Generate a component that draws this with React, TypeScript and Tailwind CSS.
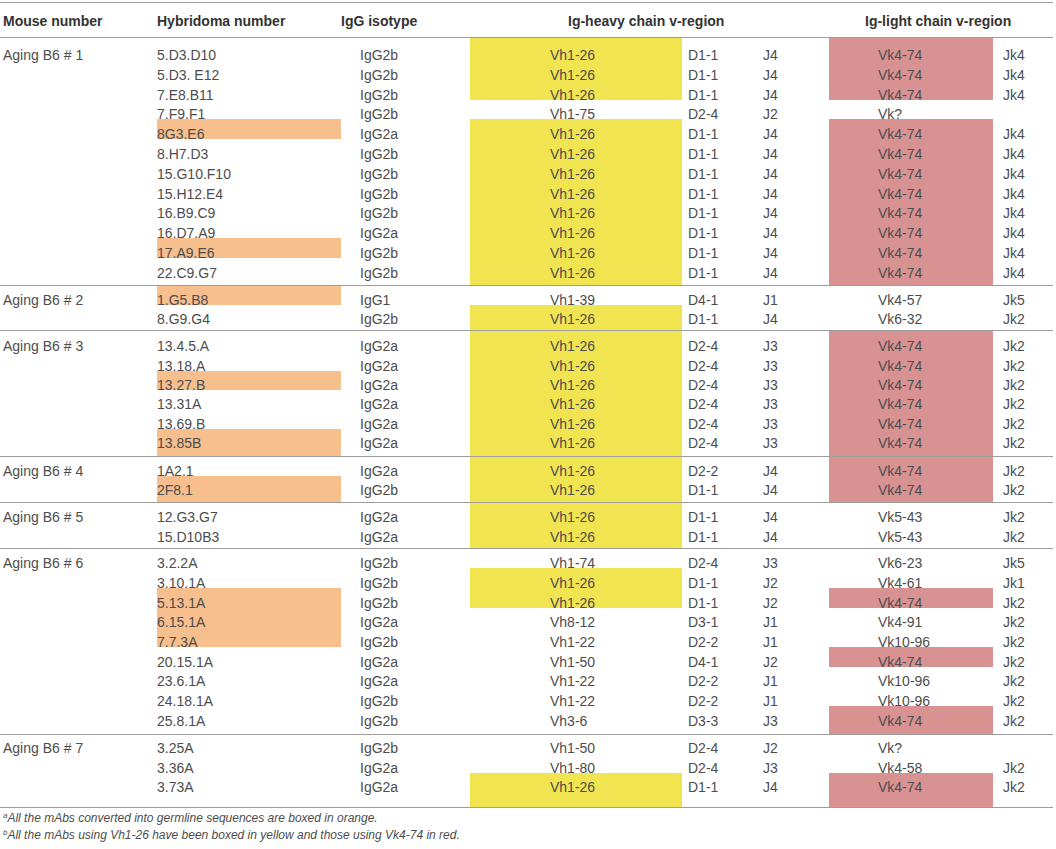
import React from "react";

type Row = {
  m?: string;
  h: string;
  i: string;
  vh: string;
  d: string;
  j: string;
  vk: string;
  jk: string;
  o?: boolean;
  y?: boolean;
  r?: boolean;
};

type Group = {
  first: string;
  mid: string;
  last: string;
  pb: string;
  rows: Row[];
};

const V = (
  h: string,
  i: string,
  vh: string,
  d: string,
  j: string,
  vk: string,
  jk: string,
  flags = "",
  m?: string
): Row => ({
  m,
  h,
  i,
  vh,
  d,
  j,
  vk,
  jk,
  o: flags.includes("o"),
  y: flags.includes("y"),
  r: flags.includes("r"),
});

const groups: Group[] = [
  {
    first: "h-[22px]",
    mid: "h-[19.8px]",
    last: "h-[26.8px]",
    pb: "pb-[7px]",
    rows: [
      V("5.D3.D10", "IgG2b", "Vh1-26", "D1-1", "J4", "Vk4-74", "Jk4", "yr", "Aging B6 # 1"),
      V("5.D3. E12", "IgG2b", "Vh1-26", "D1-1", "J4", "Vk4-74", "Jk4", "yr"),
      V("7.E8.B11", "IgG2b", "Vh1-26", "D1-1", "J4", "Vk4-74", "Jk4", "yr"),
      V("7.F9.F1", "IgG2b", "Vh1-75", "D2-4", "J2", "Vk?", ""),
      V("8G3.E6", "IgG2a", "Vh1-26", "D1-1", "J4", "Vk4-74", "Jk4", "oyr"),
      V("8.H7.D3", "IgG2b", "Vh1-26", "D1-1", "J4", "Vk4-74", "Jk4", "yr"),
      V("15.G10.F10", "IgG2b", "Vh1-26", "D1-1", "J4", "Vk4-74", "Jk4", "yr"),
      V("15.H12.E4", "IgG2b", "Vh1-26", "D1-1", "J4", "Vk4-74", "Jk4", "yr"),
      V("16.B9.C9", "IgG2b", "Vh1-26", "D1-1", "J4", "Vk4-74", "Jk4", "yr"),
      V("16.D7.A9", "IgG2a", "Vh1-26", "D1-1", "J4", "Vk4-74", "Jk4", "yr"),
      V("17.A9.E6", "IgG2b", "Vh1-26", "D1-1", "J4", "Vk4-74", "Jk4", "oyr"),
      V("22.C9.G7", "IgG2b", "Vh1-26", "D1-1", "J4", "Vk4-74", "Jk4", "yr"),
    ],
  },
  {
    first: "h-[19px]",
    mid: "h-[19.3px]",
    last: "h-[25.7px]",
    pb: "pb-[6.4px]",
    rows: [
      V("1.G5.B8", "IgG1", "Vh1-39", "D4-1", "J1", "Vk4-57", "Jk5", "o", "Aging B6 # 2"),
      V("8.G9.G4", "IgG2b", "Vh1-26", "D1-1", "J4", "Vk6-32", "Jk2", "y"),
    ],
  },
  {
    first: "h-[20px]",
    mid: "h-[19.3px]",
    last: "h-[27px]",
    pb: "pb-[7.4px]",
    rows: [
      V("13.4.5.A", "IgG2a", "Vh1-26", "D2-4", "J3", "Vk4-74", "Jk2", "yr", "Aging B6 # 3"),
      V("13.18.A", "IgG2a", "Vh1-26", "D2-4", "J3", "Vk4-74", "Jk2", "yr"),
      V("13.27.B", "IgG2a", "Vh1-26", "D2-4", "J3", "Vk4-74", "Jk2", "oyr"),
      V("13.31A", "IgG2a", "Vh1-26", "D2-4", "J3", "Vk4-74", "Jk2", "yr"),
      V("13.69.B", "IgG2a", "Vh1-26", "D2-4", "J3", "Vk4-74", "Jk2", "yr"),
      V("13.85B", "IgG2a", "Vh1-26", "D2-4", "J3", "Vk4-74", "Jk2", "oyr"),
    ],
  },
  {
    first: "h-[19.3px]",
    mid: "h-[19.3px]",
    last: "h-[25.7px]",
    pb: "pb-[6.4px]",
    rows: [
      V("1A2.1", "IgG2a", "Vh1-26", "D2-2", "J4", "Vk4-74", "Jk2", "yr", "Aging B6 # 4"),
      V("2F8.1", "IgG2b", "Vh1-26", "D1-1", "J4", "Vk4-74", "Jk2", "oyr"),
    ],
  },
  {
    first: "h-[19.3px]",
    mid: "h-[19.7px]",
    last: "h-[25.7px]",
    pb: "pb-[6px]",
    rows: [
      V("12.G3.G7", "IgG2a", "Vh1-26", "D1-1", "J4", "Vk5-43", "Jk2", "y", "Aging B6 # 5"),
      V("15.D10B3", "IgG2a", "Vh1-26", "D1-1", "J4", "Vk5-43", "Jk2", "y"),
    ],
  },
  {
    first: "h-[19.6px]",
    mid: "h-[19.7px]",
    last: "h-[27.7px]",
    pb: "pb-[8px]",
    rows: [
      V("3.2.2A", "IgG2b", "Vh1-74", "D2-4", "J3", "Vk6-23", "Jk5", "", "Aging B6 # 6"),
      V("3.10.1A", "IgG2b", "Vh1-26", "D1-1", "J2", "Vk4-61", "Jk1", "y"),
      V("5.13.1A", "IgG2b", "Vh1-26", "D1-1", "J2", "Vk4-74", "Jk2", "oyr"),
      V("6.15.1A", "IgG2a", "Vh8-12", "D3-1", "J1", "Vk4-91", "Jk2", "o"),
      V("7.7.3A", "IgG2b", "Vh1-22", "D2-2", "J1", "Vk10-96", "Jk2", "o"),
      V("20.15.1A", "IgG2a", "Vh1-50", "D4-1", "J2", "Vk4-74", "Jk2", "r"),
      V("23.6.1A", "IgG2a", "Vh1-22", "D2-2", "J1", "Vk10-96", "Jk2"),
      V("24.18.1A", "IgG2b", "Vh1-22", "D2-2", "J1", "Vk10-96", "Jk2"),
      V("25.8.1A", "IgG2b", "Vh3-6", "D3-3", "J3", "Vk4-74", "Jk2", "r"),
    ],
  },
  {
    first: "h-[18.4px]",
    mid: "h-[19.7px]",
    last: "h-[34.3px]",
    pb: "pb-[14.6px]",
    rows: [
      V("3.25A", "IgG2b", "Vh1-50", "D2-4", "J2", "Vk?", "", "", "Aging B6 # 7"),
      V("3.36A", "IgG2a", "Vh1-80", "D2-4", "J3", "Vk4-58", "Jk2"),
      V("3.73A", "IgG2a", "Vh1-26", "D1-1", "J4", "Vk4-74", "Jk2", "yr"),
    ],
  },
];

const GRID = "grid grid-cols-[157px_184px_129px_212px_75px_72px_164px_60px]";

function Cell({
  children,
  cls,
  pb,
}: {
  children?: React.ReactNode;
  cls: string;
  pb: string;
}) {
  return (
    <div className={`flex h-full items-end ${cls} ${pb}`}>
      <span className="-mb-[2px] whitespace-pre leading-[14px]">{children}</span>
    </div>
  );
}

function Line() {
  return <div className="h-px w-[1053px] bg-[#9d9d9d]" />;
}

export default function App() {
  return (
    <div className="h-[849px] w-[1056px] overflow-hidden bg-white font-['Liberation_Sans',Arial,sans-serif] text-[14px] text-[#4d4d4d]">
      <div className="w-[1053px]">
        <div className="mt-[2px] h-px bg-[#9d9d9d]" />
        <div className={`${GRID} h-[34px] items-start pt-[11px] font-bold text-[#333333]`}>
          <div className="pl-[3px] leading-[14px]">Mouse number</div>
          <div className="leading-[14px]">Hybridoma number</div>
          <div className="leading-[14px]">IgG isotype</div>
          <div className="col-span-3 pl-[98px] leading-[14px]">Ig-heavy chain v-region</div>
          <div className="col-span-2 pl-[36px] leading-[14px]">Ig-light chain v-region</div>
        </div>
        <Line />
        {groups.map((g, gi) => (
          <div key={gi}>
            {g.rows.map((r, ri) => {
              const isFirst = ri === 0;
              const isLast = ri === g.rows.length - 1;
              const h = isLast ? g.last : isFirst ? g.first : g.mid;
              const pb = isLast ? g.pb : "";
              return (
                <div key={ri} className={`${GRID} ${h}`}>
                  <Cell cls="pl-[3px]" pb={pb}>
                    {r.m ?? ""}
                  </Cell>
                  <Cell cls={r.o ? "bg-[#f7be8e]" : ""} pb={pb}>
                    {r.h}
                  </Cell>
                  <Cell cls="pl-[19px]" pb={pb}>
                    {r.i}
                  </Cell>
                  <Cell cls={`pl-[80px] ${r.y ? "bg-[#f1e451]" : ""}`} pb={pb}>
                    {r.vh}
                  </Cell>
                  <Cell cls="pl-[6px]" pb={pb}>
                    {r.d}
                  </Cell>
                  <Cell cls="pl-[6px]" pb={pb}>
                    {r.j}
                  </Cell>
                  <Cell cls={`pl-[49px] ${r.r ? "bg-[#d89292]" : ""}`} pb={pb}>
                    {r.vk}
                  </Cell>
                  <Cell cls="pl-[10px]" pb={pb}>
                    {r.jk}
                  </Cell>
                </div>
              );
            })}
            <Line />
          </div>
        ))}
      </div>
      <div className="mt-[2px] pl-[3px] text-[12px] italic leading-[17px] text-[#4d4d4d]">
        <p>
          <sup className="text-[8px]">a</sup>All the mAbs converted into germline sequences are boxed in orange.
        </p>
        <p>
          <sup className="text-[8px]">b</sup>All the mAbs using Vh1-26 have been boxed in yellow and those using Vk4-74 in red.
        </p>
      </div>
    </div>
  );
}
